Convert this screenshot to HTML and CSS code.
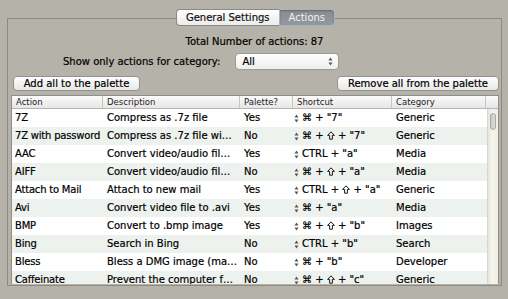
FILE: index.html
```html
<!DOCTYPE html>
<html lang="en">
<head>
  <meta charset="UTF-8" />
  <title>Preferences – Actions</title>
  <link rel="stylesheet" href="styles.css">
</head>
<body>
<div class="prefs">
  <div class="tabs">
    <button class="tab">General Settings</button>
    <button class="tab active">Actions</button>
  </div>

  <div class="box">
    <p class="total">Total Number of actions: 87</p>

    <div class="filter">
      <label>Show only actions for category:</label>
      <div class="popup">
        <span>All</span>
        <svg class="updown" width="5" height="9" viewBox="0 0 5 9"><polygon points="0.5,3.5 2.5,0.5 4.5,3.5" /><polygon points="0.5,5.5 2.5,8.5 4.5,5.5" /></svg>
      </div>
    </div>

    <div class="buttons">
      <button class="btn add">Add all to the palette</button>
      <button class="btn remove">Remove all from the palette</button>
    </div>

    <div class="table">
      <div class="thead">
        <div class="th">Action</div>
        <div class="th">Description</div>
        <div class="th">Palette?</div>
        <div class="th">Shortcut</div>
        <div class="th">Category</div>
        <div class="th corner"></div>
      </div>
      <div class="tbody">
        <div class="rows" id="rows"></div>
        <div class="scrollbar"><div class="thumb"></div></div>
      </div>
    </div>
  </div>
</div>

<script>
  // "S" in a shortcut stands for the shift key, drawn as an outline arrow
  const actions = [
    ["7Z", "Compress as .7z file", "Yes", "⌘ + \"7\"", "Generic"],
    ["7Z with password", "Compress as .7z file wi…", "No", "⌘ + S + \"7\"", "Generic"],
    ["AAC", "Convert video/audio fil…", "Yes", "CTRL + \"a\"", "Media"],
    ["AIFF", "Convert video/audio fil…", "No", "⌘ + S + \"a\"", "Media"],
    ["Attach to Mail", "Attach to new mail", "Yes", "CTRL + S + \"a\"", "Generic"],
    ["Avi", "Convert video file to .avi", "Yes", "⌘ + \"a\"", "Media"],
    ["BMP", "Convert to .bmp image", "Yes", "⌘ + S + \"b\"", "Images"],
    ["Bing", "Search in Bing", "No", "CTRL + \"b\"", "Search"],
    ["Bless", "Bless a DMG image (ma…", "No", "⌘ + \"b\"", "Developer"],
    ["Caffeinate", "Prevent the computer f…", "No", "⌘ + S + \"c\"", "Generic"]
  ];

  const stepper = '<svg class="updown" width="5" height="9" viewBox="0 0 5 9"><polygon points="0.5,3.5 2.5,0.5 4.5,3.5" /><polygon points="0.5,5.5 2.5,8.5 4.5,5.5" /></svg>';
  const shift = '<svg class="shift" width="8" height="9" viewBox="0 0 8 9"><path d="M4 0.8 L7.4 4.4 H5.4 V8.2 H2.6 V4.4 H0.6 Z" /></svg>';

  const rows = document.getElementById("rows");
  actions.forEach(function (a) {
    const keys = a[3].split(" ").map(function (k) {
      return k === "S" ? shift : k;
    }).join(" ");
    const row = document.createElement("div");
    row.className = "row";
    row.innerHTML =
      `<div class="td name">${a[0]}</div>` +
      `<div class="td">${a[1]}</div>` +
      `<div class="td">${a[2]}</div>` +
      `<div class="td shortcut">${stepper}<span>${keys}</span></div>` +
      `<div class="td">${a[4]}</div>`;
    rows.appendChild(row);
  });
</script>
</body>
</html>
```

FILE: styles.css
```css
* {
  box-sizing: border-box;
}

body {
  margin: 0;
  background: #b4b2a9;
  font-family: "DejaVu Sans", sans-serif;
  color: #000;
}

.prefs {
  padding: 9px 6px 0 7px;
}

/* segmented tabs sitting on the box border */
.tabs {
  display: flex;
  justify-content: center;
  position: relative;
  z-index: 1;
  margin-bottom: -8px;
  padding-left: 2px;
}
.tab {
  height: 17px;
  padding: 0 9px;
  font-family: "DejaVu Sans", sans-serif;
  font-size: 10px;
  color: #111;
  border: 1px solid #8a8a88;
  background: linear-gradient(#ffffff, #ebebea);
  -webkit-text-stroke: 0.2px #111;
}
.tab:first-child {
  border-radius: 4px 0 0 4px;
  border-right: none;
}
.tab.active {
  border-radius: 0 4px 4px 0;
  background: linear-gradient(#8a8c8d, #95979a);
  border-color: #9db7d0;
  color: #eef2f6;
  box-shadow: inset 0 1px 2px rgba(0, 0, 0, 0.25);
  -webkit-text-stroke: 0;
}

.box {
  height: 268px;
  border: 1px solid #8c8a83;
  display: flex;
  flex-direction: column;
}

.total {
  margin: 16px 0 0;
  font-size: 10px;
  line-height: 14px;
  text-align: center;
  -webkit-text-stroke: 0.2px #000;
}

.filter {
  display: flex;
  align-items: center;
  gap: 15px;
  height: 17px;
  margin: 4px 0 0 55px;
  font-size: 10px;
  -webkit-text-stroke: 0.2px #000;
}
.popup {
  width: 104px;
  height: 17px;
  display: flex;
  align-items: center;
  justify-content: space-between;
  padding: 0 5px 0 6px;
  border: 1px solid #9a9a98;
  border-radius: 4px;
  background: linear-gradient(#ffffff, #eeeeec);
}

.updown polygon {
  fill: #555;
}

.buttons {
  display: flex;
  justify-content: space-between;
  margin: 6px 2px 0 5px;
}
.btn {
  height: 15px;
  padding: 0;
  font-family: "DejaVu Sans", sans-serif;
  font-size: 10px;
  color: #000;
  border: 1px solid #929290;
  border-radius: 4px;
  background: linear-gradient(#fefefe, #e8e8e6);
  -webkit-text-stroke: 0.2px #000;
}
.btn.add {
  width: 127px;
}
.btn.remove {
  width: 162px;
}

/* table */
.table {
  height: 189px;
  margin: 4px 2px 0 3px;
  border: 1px solid #8e8e8c;
  border-bottom: none;
  display: flex;
  flex-direction: column;
  overflow: hidden;
}
.thead {
  display: grid;
  grid-template-columns: 91px 137px 53px 99px 94px 1fr;
  height: 13px;
  background: linear-gradient(#fbfbfb, #e6e6e6);
  border-bottom: 1px solid #b5b5b3;
}
.th {
  padding-left: 4px;
  font-size: 8.5px;
  line-height: 12px;
  color: #222;
  border-right: 1px solid #c6c6c4;
  white-space: nowrap;
}
.th.corner {
  border-right: none;
}

.tbody {
  flex: 1;
  display: flex;
  overflow: hidden;
}
.rows {
  flex: 1;
}
.row {
  display: grid;
  grid-template-columns: 91px 137px 53px 99px 1fr;
  height: 18px;
  background: #fff;
}
.row:nth-child(even) {
  background: #eef2ee;
}
.td {
  padding-left: 4px;
  font-size: 10px;
  line-height: 18px;
  white-space: nowrap;
  overflow: hidden;
  -webkit-text-stroke: 0.2px #000;
}
.td.name {
  letter-spacing: -0.2px;
  padding-left: 3px;
}
.td.shortcut {
  display: flex;
  align-items: center;
  gap: 3px;
  padding-left: 1px;
}
.shift {
  vertical-align: -1px;
}
.shift path {
  fill: none;
  stroke: #000;
  stroke-width: 0.9;
  stroke-linejoin: round;
}

.scrollbar {
  width: 11px;
  padding: 4px 2px 0 2px;
  background: linear-gradient(to right, #e6e5dc, #f7f6ee 40%, #efeee5);
  border-left: 1px solid #d8d7cf;
}
.thumb {
  height: 17px;
  border: 1px solid #a8a8a6;
  border-radius: 4px;
  background: linear-gradient(to right, #c9c9c7, #dcdcda);
}
```
